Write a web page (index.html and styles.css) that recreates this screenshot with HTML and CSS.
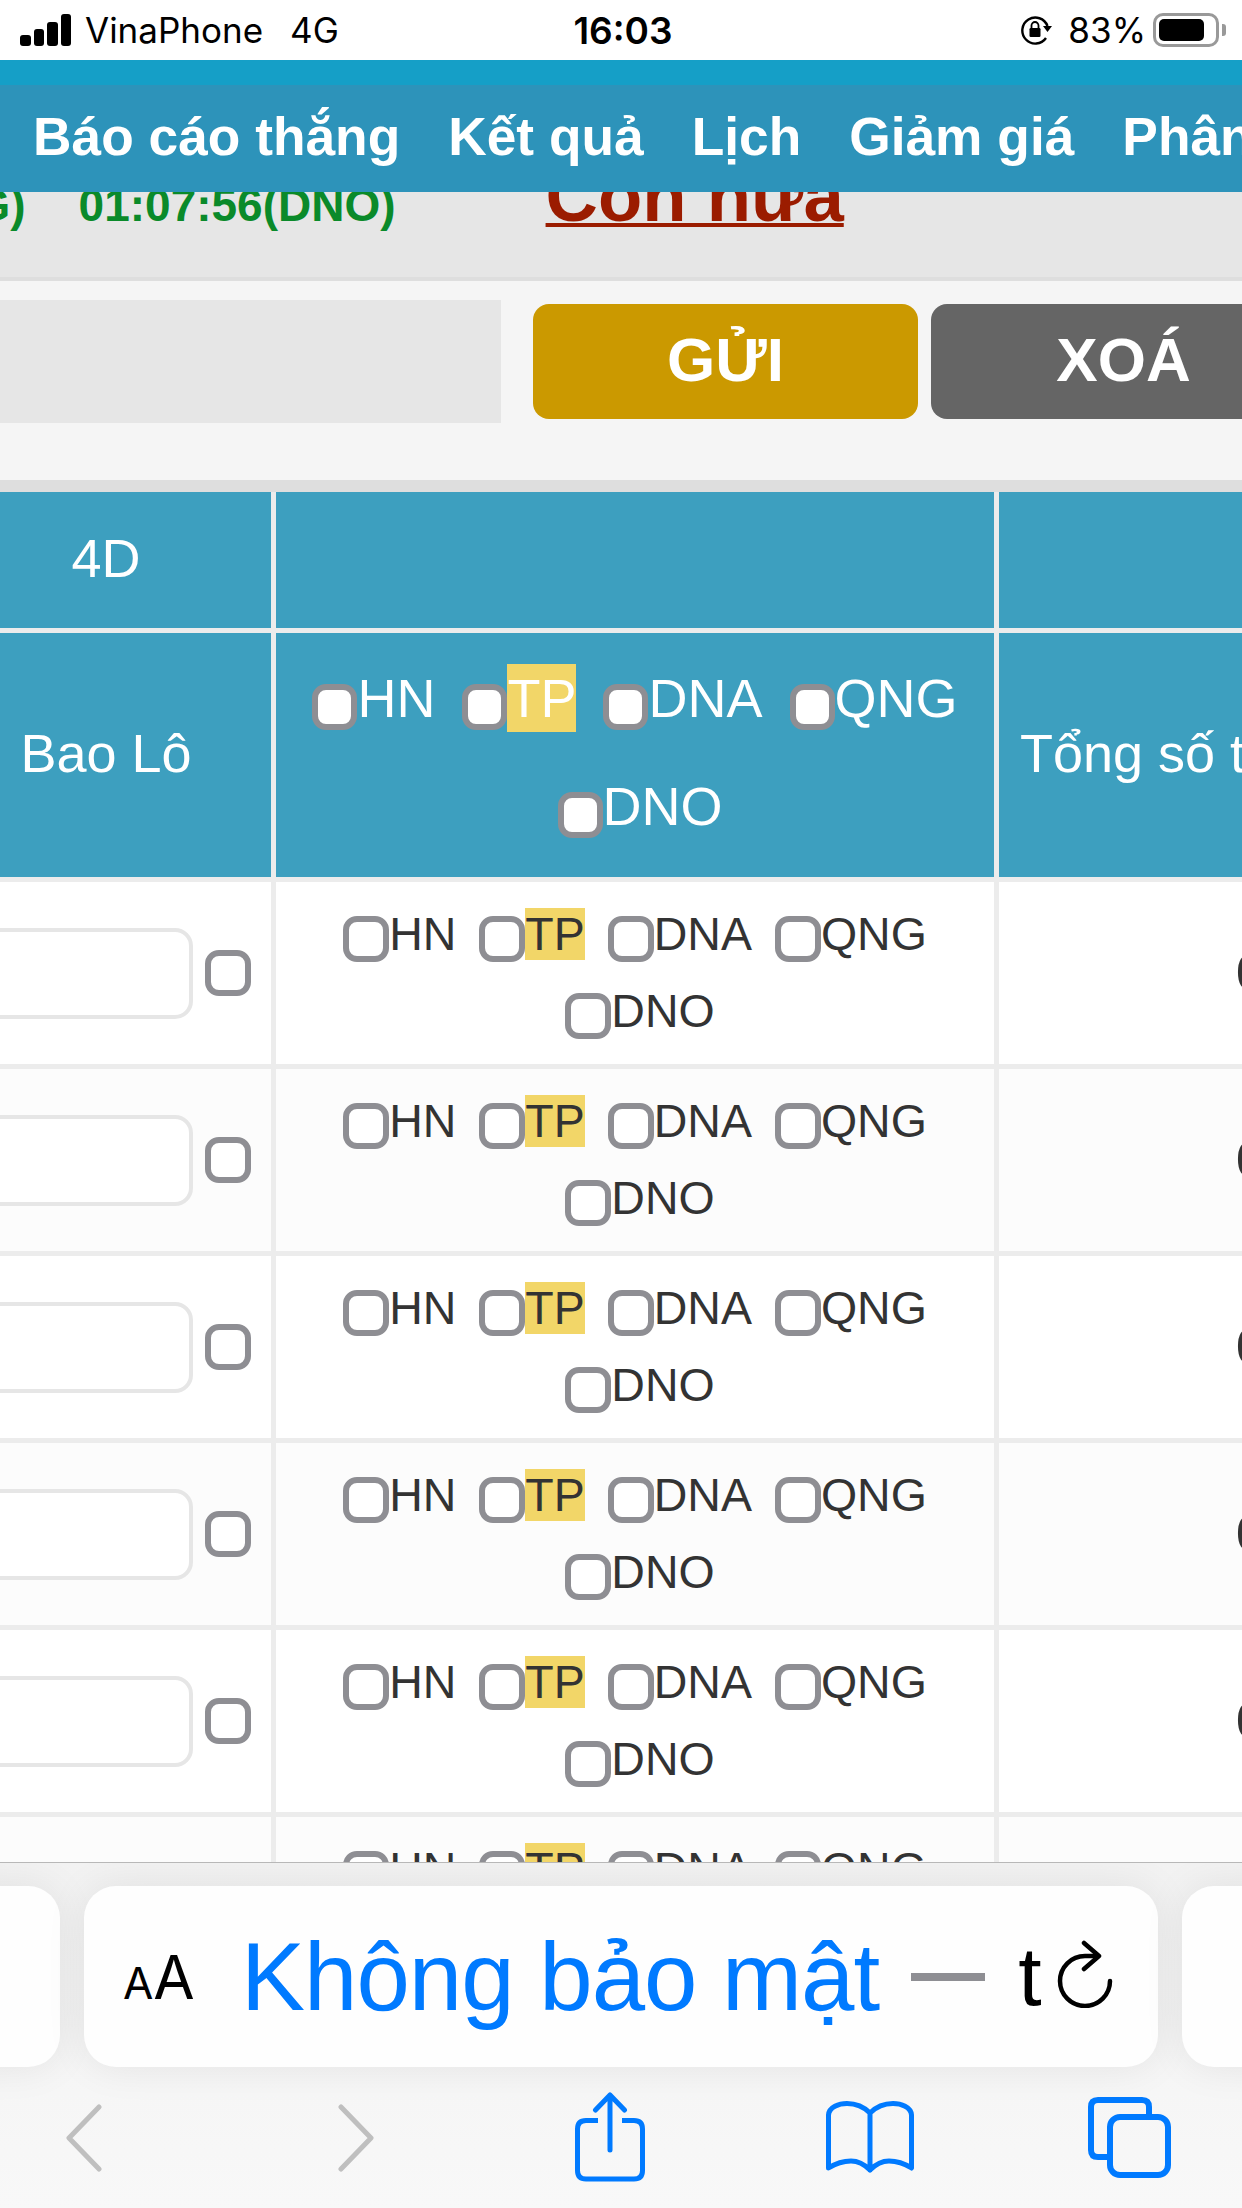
FILE: index.html
```html
<!DOCTYPE html>
<html lang="vi">
<head>
  <meta charset="UTF-8">
  <title>Bảng cược</title>
  <link rel="stylesheet" href="styles.css">
</head>
<body>

  <div class="status-bar">
    <div class="status-left">
      <div class="signal"><i class="s1"></i><i class="s2"></i><i class="s3"></i><i class="s4"></i></div>
      <span class="carrier">VinaPhone</span>
      <span class="network">4G</span>
    </div>
    <div class="status-time">16:03</div>
    <div class="status-right">
      <svg class="rotation-lock" width="32" height="30" viewBox="0 0 32 30">
        <path d="M26 23 A13 13 0 1 1 27.5 11" fill="none" stroke="#000" stroke-width="2.4"/>
        <path d="M23 11 H32 L27.5 17 Z" fill="#000"/>
        <rect x="9.5" y="13" width="11" height="9" rx="1.2" fill="#000"/>
        <path d="M11.5 13 V10.5 A3.5 3.5 0 0 1 18.5 10.5 V13" fill="none" stroke="#000" stroke-width="1.8"/>
      </svg>
      <span class="battery-text">83%</span>
      <div class="battery"><div class="battery-fill"></div></div>
      <div class="battery-nub"></div>
    </div>
  </div>

  <div class="top-strip"></div>

  <nav class="main-nav">
    <a>Báo cáo thắng</a>
    <a>Kết quả</a>
    <a>Lịch</a>
    <a>Giảm giá</a>
    <a>Phân</a>
  </nav>

  <div class="notice">
    <div class="notice-row">
      <span class="draw-times">01:07:56(QNG)</span>
      <span class="draw-times">01:07:56(DNO)</span>
      <a class="more-link">Còn nữa</a>
    </div>
  </div>

  <div class="bet-form">
    <input class="bet-input" type="text">
    <button class="btn btn-send">GỬI</button>
    <button class="btn btn-clear">XOÁ</button>
  </div>

  <div class="table-wrap">
    <table class="bet-table">
      <thead>
        <tr class="head-top">
          <th>4D</th>
          <th></th>
          <th></th>
        </tr>
        <tr class="head-main">
          <th>Bao Lô</th>
          <th>
            <div class="zones">
              <label><input type="checkbox">HN</label>
              <label><input type="checkbox"><span class="tp">TP</span></label>
              <label><input type="checkbox">DNA</label>
              <label><input type="checkbox">QNG</label>
              <label><input type="checkbox">DNO</label>
            </div>
          </th>
          <th class="total-head">Tổng số tiền</th>
        </tr>
      </thead>
      <tbody>
        <tr>
          <td><div class="lo-cell"><input class="lo-input" type="text"><input type="checkbox"></div></td>
          <td>
            <div class="zones">
              <label><input type="checkbox">HN</label>
              <label><input type="checkbox"><span class="tp">TP</span></label>
              <label><input type="checkbox">DNA</label>
              <label><input type="checkbox">QNG</label>
              <label><input type="checkbox">DNO</label>
            </div>
          </td>
          <td class="total">0</td>
        </tr>
        <tr>
          <td><div class="lo-cell"><input class="lo-input" type="text"><input type="checkbox"></div></td>
          <td>
            <div class="zones">
              <label><input type="checkbox">HN</label>
              <label><input type="checkbox"><span class="tp">TP</span></label>
              <label><input type="checkbox">DNA</label>
              <label><input type="checkbox">QNG</label>
              <label><input type="checkbox">DNO</label>
            </div>
          </td>
          <td class="total">0</td>
        </tr>
        <tr>
          <td><div class="lo-cell"><input class="lo-input" type="text"><input type="checkbox"></div></td>
          <td>
            <div class="zones">
              <label><input type="checkbox">HN</label>
              <label><input type="checkbox"><span class="tp">TP</span></label>
              <label><input type="checkbox">DNA</label>
              <label><input type="checkbox">QNG</label>
              <label><input type="checkbox">DNO</label>
            </div>
          </td>
          <td class="total">0</td>
        </tr>
        <tr>
          <td><div class="lo-cell"><input class="lo-input" type="text"><input type="checkbox"></div></td>
          <td>
            <div class="zones">
              <label><input type="checkbox">HN</label>
              <label><input type="checkbox"><span class="tp">TP</span></label>
              <label><input type="checkbox">DNA</label>
              <label><input type="checkbox">QNG</label>
              <label><input type="checkbox">DNO</label>
            </div>
          </td>
          <td class="total">0</td>
        </tr>
        <tr>
          <td><div class="lo-cell"><input class="lo-input" type="text"><input type="checkbox"></div></td>
          <td>
            <div class="zones">
              <label><input type="checkbox">HN</label>
              <label><input type="checkbox"><span class="tp">TP</span></label>
              <label><input type="checkbox">DNA</label>
              <label><input type="checkbox">QNG</label>
              <label><input type="checkbox">DNO</label>
            </div>
          </td>
          <td class="total">0</td>
        </tr>
        <tr>
          <td><div class="lo-cell"><input class="lo-input" type="text"><input type="checkbox"></div></td>
          <td>
            <div class="zones">
              <label><input type="checkbox">HN</label>
              <label><input type="checkbox"><span class="tp">TP</span></label>
              <label><input type="checkbox">DNA</label>
              <label><input type="checkbox">QNG</label>
              <label><input type="checkbox">DNO</label>
            </div>
          </td>
          <td class="total">0</td>
        </tr>
      </tbody>
    </table>
  </div>

  <div class="toolbar">
    <div class="pills">
      <div class="pill pill-side pill-left"></div>
      <div class="pill pill-main">
        <span class="aa"><small>A</small>A</span>
        <span class="url-label">Không bảo mật</span>
        <span class="url-dash">—</span>
        <span class="url-end">t</span>
        <svg class="reload" width="60" height="68" viewBox="18 14 60 68">
          <path d="M60 30 H48 A25 25 0 1 0 73 55" fill="none" stroke="#000" stroke-width="4.5" stroke-linecap="round"/>
          <path d="M47 17 L62 30 L47 43" fill="none" stroke="#000" stroke-width="4.5" stroke-linecap="round" stroke-linejoin="round"/>
        </svg>
      </div>
      <div class="pill pill-side"></div>
    </div>
    <div class="tool-icons">
      <svg class="ic-back" width="38" height="68" viewBox="0 0 38 68"><path d="M34 3 L4 34 L34 65" fill="none" stroke="#bfbfbf" stroke-width="5" stroke-linecap="round" stroke-linejoin="round"/></svg>
      <svg class="ic-forward" width="38" height="68" viewBox="0 0 38 68"><path d="M4 3 L34 34 L4 65" fill="none" stroke="#bfbfbf" stroke-width="5" stroke-linecap="round" stroke-linejoin="round"/></svg>
      <svg class="ic-share" width="76" height="92" viewBox="12 10 76 92">
        <path d="M38 38.5 H26 Q17.5 38.5 17.5 47 V88.5 Q17.5 97 26 97 H74 Q82.5 97 82.5 88.5 V47 Q82.5 38.5 74 38.5 H62" fill="none" stroke="#007aff" stroke-width="5"/>
        <path d="M50 68 V13 M35.5 28 L50 13 L64.5 28" fill="none" stroke="#007aff" stroke-width="5" stroke-linecap="round" stroke-linejoin="round"/>
      </svg>
      <svg class="ic-book" width="96" height="78" viewBox="262 20 96 78">
        <path d="M310 34 C303 27 294 24.5 287 24.5 C279 24.5 269 28 268.5 36 V89 C278 83 286 82 291 82 C298 82 305 86 310 91 C315 86 322 82 329 82 C334 82 342 83 351.5 89 V36 C351 28 341 24.5 333 24.5 C326 24.5 317 27 310 34 V91" fill="none" stroke="#007aff" stroke-width="5" stroke-linejoin="round" stroke-linecap="round"/>
      </svg>
      <svg class="ic-tabs" width="92" height="88" viewBox="24 10 92 88">
        <path d="M50 73 H38 Q31 73 31 66 V23 Q31 16 38 16 H82 Q89 16 89 23 V33" fill="none" stroke="#007aff" stroke-width="6"/>
        <rect x="50" y="33" width="58" height="58" rx="10" fill="none" stroke="#007aff" stroke-width="6"/>
      </svg>
    </div>
  </div>

</body>
</html>
```

FILE: styles.css
```css
html, body {
  margin: 0;
  padding: 0;
}
body {
  width: 1242px;
  height: 2208px;
  overflow: hidden;
  display: flex;
  flex-direction: column;
  background-color: #f5f5f5;
  font-family: "Liberation Sans", Arial, sans-serif;
}

/* status bar */
.status-bar {
  height: 60px;
  flex: none;
  display: grid;
  grid-template-columns: 1fr auto 1fr;
  align-items: center;
  padding: 0 16px 0 20px;
  box-sizing: border-box;
  background-color: #fff;
  color: #000;
  font-family: Inter, "Noto Sans", sans-serif;
  font-size: 35px;
}
.status-left {
  display: flex;
  align-items: center;
}
.signal {
  display: flex;
  align-items: flex-end;
  gap: 3px;
  height: 32px;
  margin-right: 14px;
}
.signal i {
  display: block;
  width: 10.5px;
  border-radius: 3px;
  background-color: #000;
}
.signal .s1 { height: 11px; }
.signal .s2 { height: 17px; }
.signal .s3 { height: 24px; }
.signal .s4 { height: 32px; }
.carrier {
  margin-right: 27px;
}
.status-time {
  font-weight: 600;
  font-size: 37px;
}
.status-right {
  display: flex;
  align-items: center;
  justify-content: flex-end;
}
.rotation-lock {
  margin-right: 16px;
}
.battery-text {
  margin-right: 7px;
}
.battery {
  width: 66px;
  height: 34px;
  box-sizing: border-box;
  border: 3px solid #999;
  border-radius: 10px;
  padding: 3px;
}
.battery-fill {
  width: 45px;
  height: 100%;
  border-radius: 5px;
  background-color: #000;
}
.battery-nub {
  width: 4px;
  height: 12px;
  margin-left: 3px;
  border-radius: 0 3px 3px 0;
  background-color: #999;
}

/* top of the site */
.top-strip {
  height: 25px;
  flex: none;
  background-color: #159fc7;
}
.main-nav {
  height: 107px;
  flex: none;
  box-sizing: border-box;
  display: flex;
  align-items: center;
  gap: 48px;
  padding: 0 0 5px 33px;
  background-color: #2d93ba;
  color: #fff;
  font-size: 53.3px;
  font-weight: bold;
  white-space: nowrap;
}
.notice {
  height: 85px;
  flex: none;
  overflow: hidden;
  background-color: #e6e6e6;
  border-bottom: 4px solid #dedede;
  white-space: nowrap;
}
.notice-row {
  display: flex;
  align-items: baseline;
  margin-top: -38px;
  margin-left: -294px;
}
.draw-times {
  flex: none;
  margin-right: 53px;
  color: #0a8a2a;
  font-size: 46px;
  font-weight: bold;
}
.more-link {
  flex: none;
  margin-left: 97px;
  color: #9b1c00;
  font-size: 72.5px;
  font-weight: bold;
  text-decoration: underline;
  text-decoration-thickness: 4px;
}

/* form */
.bet-form {
  height: 199px;
  flex: none;
  box-sizing: border-box;
  display: flex;
  align-items: flex-start;
  padding-top: 19px;
  overflow: hidden;
}
.bet-input {
  flex: none;
  width: 501px;
  height: 123px;
  box-sizing: border-box;
  border: none;
  padding: 0;
  margin: 0 32px 0 0;
  background-color: #e6e6e6;
}
.btn {
  flex: none;
  height: 115px;
  margin-top: 4px;
  padding: 0 0 4px;
  border: none;
  border-radius: 16px;
  color: #fff;
  font-family: "Liberation Sans", Arial, sans-serif;
  font-size: 62px;
  font-weight: bold;
}
.btn-send {
  width: 385px;
  margin-right: 13px;
  background-color: #cb9900;
}
.btn-clear {
  width: 385px;
  background-color: #656565;
}

/* table */
.table-wrap {
  flex: 1;
  min-height: 0;
  overflow: hidden;
  border-top: 12px solid #dedede;
  background-color: #fff;
}
.bet-table {
  width: 1565px;
  margin-left: -59px;
  table-layout: fixed;
  border-collapse: separate;
  border-spacing: 0;
}
.bet-table th:nth-child(1), .bet-table td:nth-child(1) {
  width: 330px;
}
.bet-table th:nth-child(2), .bet-table td:nth-child(2) {
  width: 718px;
}
.bet-table th, .bet-table td {
  border-right: 5px solid #ececec;
  border-bottom: 5px solid #ececec;
  padding: 0;
  text-align: center;
}
.bet-table th {
  padding-bottom: 4px;
  background-color: #3d9fbf;
  color: #fff;
  font-size: 54px;
  font-weight: normal;
}
.head-top th {
  height: 132px;
}
.head-main th {
  height: 240px;
}
.bet-table .total-head {
  padding-left: 21px;
  text-align: left;
  white-space: nowrap;
}
.bet-table td {
  height: 182px;
  color: #333;
  font-size: 46.5px;
  background-color: #fff;
}
.bet-table tbody tr:nth-child(even) td {
  background-color: #fcfcfc;
}
.bet-table td.total {
  font-size: 50px;
}
.zones {
  display: flex;
  flex-wrap: wrap;
  justify-content: center;
  column-gap: 23px;
  line-height: 77px;
}
.bet-table th .zones {
  column-gap: 27px;
  line-height: 108px;
  margin-top: -3px;
}
.zones label {
  white-space: nowrap;
}
.zones label:last-child {
  margin-left: 10px;
}
input[type="checkbox"] {
  appearance: none;
  -webkit-appearance: none;
  width: 46px;
  height: 46px;
  box-sizing: border-box;
  margin: 0;
  border: 6px solid #8e8e93;
  border-radius: 14px;
  background-color: #fff;
  vertical-align: -12px;
}
.bet-table th input[type="checkbox"] {
  width: 45px;
  vertical-align: -13px;
}
.tp {
  background-color: #f2d668;
}
.bet-table th .tp {
  padding: 4px 0;
}
.lo-cell {
  display: flex;
  align-items: center;
  gap: 12px;
}
.lo-input {
  flex: none;
  width: 252px;
  height: 91px;
  box-sizing: border-box;
  margin: 0;
  border: 4px solid #e6e6e6;
  border-radius: 18px;
  background-color: #fff;
}

/* safari toolbar */
.toolbar {
  height: 346px;
  flex: none;
  overflow: hidden;
  box-sizing: border-box;
  border-top: 1px solid #b8b8b8;
  background: linear-gradient(#f2f2f2, #f8f8f8);
}
.pills {
  display: flex;
  gap: 24px;
  margin-top: 23px;
  margin-left: -140px;
}
.pill {
  flex: none;
  height: 181px;
  border-radius: 32px;
  background-color: #fefefe;
  box-shadow: 0 0 40px rgba(0, 0, 0, 0.08);
}
.pill-side {
  width: 200px;
}
.pill-main {
  width: 1074px;
  box-sizing: border-box;
  display: flex;
  align-items: center;
  padding-left: 39px;
  overflow: hidden;
  white-space: nowrap;
}
.aa {
  width: 118px;
  flex: none;
  color: #000;
  font-family: Inter, "Noto Sans", sans-serif;
  font-size: 60px;
}
.aa small {
  font-size: 44px;
}
.url-label {
  flex: none;
  color: #007aff;
  font-size: 96px;
  letter-spacing: -1px;
}
.url-dash {
  flex: none;
  width: 74px;
  height: 8px;
  margin-left: 32px;
  overflow: hidden;
  background-color: #8e8e93;
  color: transparent;
  font-size: 8px;
}
.url-end {
  flex: none;
  margin-left: 33px;
  color: #000;
  font-size: 84px;
}
.reload {
  flex: none;
  margin-left: 14px;
  margin-top: -6px;
}
.tool-icons {
  display: flex;
  align-items: center;
  height: 141px;
}
.ic-back { margin-left: 65px; }
.ic-forward { margin-left: 234px; }
.ic-share { margin-left: 197px; }
.ic-book { margin-left: 174px; }
.ic-tabs { margin-left: 166px; }
```
